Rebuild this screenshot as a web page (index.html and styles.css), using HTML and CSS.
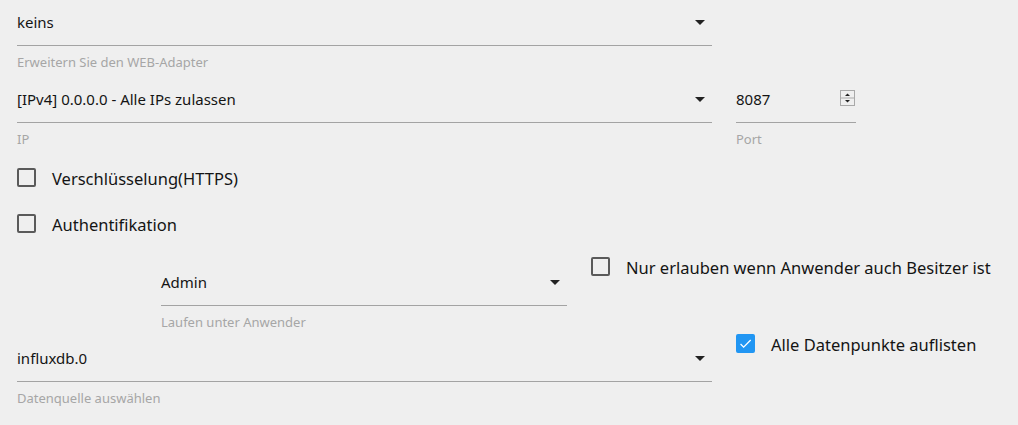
FILE: index.html
```html
<!DOCTYPE html>
<html lang="de">
<head>
<meta charset="utf-8">
<title>WEB-Adapter Einstellungen</title>
<link rel="stylesheet" href="styles.css">
</head>
<body>
<div class="form">
  <div class="row">
    <div class="field wide">
      <div class="control"><span class="value">keins</span><span class="arrow"></span></div>
      <div class="helper">Erweitern Sie den WEB-Adapter</div>
    </div>
  </div>
  <div class="row before-checks">
    <div class="field wide">
      <div class="control"><span class="value">[IPv4] 0.0.0.0 - Alle IPs zulassen</span><span class="arrow"></span></div>
      <div class="helper">IP</div>
    </div>
    <div class="field port">
      <div class="control"><span class="value num">8087</span>
        <svg class="spin" width="15" height="16" viewBox="0 0 15 16">
          <rect x="0.5" y="0.5" width="14" height="15" fill="#efefef" stroke="#a9a9a9"/>
          <line x1="1" y1="8" x2="14" y2="8" stroke="#a9a9a9"/>
          <polygon points="5,6 10,6 7.5,3.5" fill="#222"/>
          <polygon points="5,10 10,10 7.5,12.5" fill="#222"/>
        </svg>
      </div>
      <div class="helper">Port</div>
    </div>
  </div>
  <div class="checks">
    <label class="check"><span class="box"></span><span class="text">Verschlüsselung(HTTPS)</span></label>
    <label class="check"><span class="box"></span><span class="text">Authentifikation</span></label>
  </div>
  <div class="row user">
    <div class="field admin">
      <div class="control"><span class="value">Admin</span><span class="arrow"></span></div>
      <div class="helper">Laufen unter Anwender</div>
    </div>
    <label class="check"><span class="box"></span><span class="text">Nur erlauben wenn Anwender auch Besitzer ist</span></label>
  </div>
  <div class="row">
    <div class="field wide">
      <div class="control"><span class="value">influxdb.0</span><span class="arrow"></span></div>
      <div class="helper">Datenquelle auswählen</div>
    </div>
    <label class="check tight"><span class="box checked">
      <svg width="15" height="15" viewBox="0 0 24 24"><path d="M9 16.2L4.8 12l-1.4 1.4L9 19 21 7l-1.4-1.4L9 16.2z" fill="#fff"/></svg>
    </span><span class="text">Alle Datenpunkte auflisten</span></label>
  </div>
</div>
</body>
</html>
```

FILE: styles.css
```css
html, body {
  margin: 0;
  background: #efefef;
}
body {
  font-family: "Noto Sans", "Open Sans", sans-serif;
  color: #141414;
}
.form {
  padding: 6px 0 0 17px;
  display: flex;
  flex-direction: column;
}
.row {
  display: flex;
  align-items: flex-start;
  gap: 24px;
  margin-bottom: 13px;
}
.row.before-checks {
  margin-bottom: 7px;
}
.row.user {
  margin-bottom: 12px;
}
.field {
  display: flex;
  flex-direction: column;
}
.field.wide {
  width: 695px;
}
.field.port {
  width: 120px;
}
.field.admin {
  width: 406px;
  margin-left: 144px;
  margin-top: 20px;
}
.control {
  height: 32px;
  padding: 0 7px 7px 0;
  border-bottom: 1px solid #a3a3a3;
  display: flex;
  align-items: center;
  justify-content: space-between;
}
.port .control {
  padding-right: 1px;
  align-items: flex-start;
}
.port .control .value {
  line-height: 32px;
}
.spin {
  display: block;
  margin-top: 7px;
}
.value {
  font-size: 15px;
}
.arrow {
  width: 0;
  height: 0;
  border-left: 5px solid transparent;
  border-right: 5px solid transparent;
  border-top: 5px solid #222;
}
.helper {
  margin-top: 8px;
  font-size: 13px;
  line-height: 16px;
  color: #a6a6a6;
}
.checks {
  display: flex;
  flex-direction: column;
}
.check {
  display: flex;
  align-items: center;
  gap: 16px;
  height: 46px;
}
.row .check {
  height: 40px;
}
.row .check.tight {
  height: 28px;
  margin-top: -13px;
}
.box {
  width: 19px;
  height: 19px;
  box-sizing: border-box;
  border: 2px solid #5a5a5a;
  border-radius: 2px;
  flex: none;
  display: flex;
  align-items: center;
  justify-content: center;
}
.box.checked {
  background: #2196f3;
  border-color: #2196f3;
}
.text {
  font-size: 16.5px;
  color: #141414;
  padding-top: 3px;
}
```
